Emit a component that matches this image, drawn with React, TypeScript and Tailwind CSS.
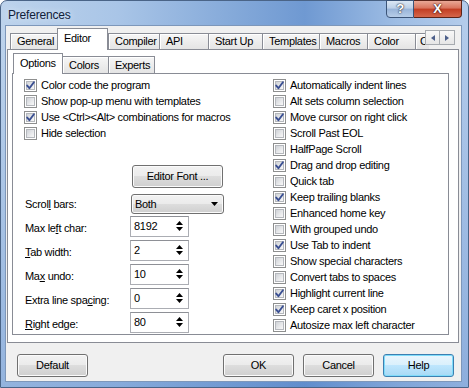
import type { FC } from "react";

const Check: FC<{ on?: boolean }> = ({ on }) => (
  <span className="relative block w-[13px] h-[13px] shrink-0 border border-[#8e8f8f] bg-white p-px">
    <span className="block w-full h-full border border-[#b5b8bd] bg-[linear-gradient(135deg,#cfd2d7_0%,#e9eaec_60%,#f8f8f8_100%)]" />
    {on && (
      <svg className="absolute left-0 top-0" width="11" height="11" viewBox="0 0 11 11">
        <path d="M2.2 5.6 L4.4 8.2 L8.9 2.2" fill="none" stroke="#3a4f92" strokeWidth="1.9" strokeLinecap="round" strokeLinejoin="round" />
      </svg>
    )}
  </span>
);

const CheckRow: FC<{ on?: boolean; label: string }> = ({ on, label }) => (
  <div className="flex items-center h-[16px] gap-[4px]">
    <Check on={on} />
    <span className="whitespace-nowrap">{label}</span>
  </div>
);

const Spin: FC<{ label: React.ReactNode; value: string }> = ({ label, value }) => (
  <div className="flex items-start h-[21px]">
    <span className="w-[106px] pl-px pt-[5px] leading-[14px] whitespace-nowrap">{label}</span>
    <div className="w-[59px] h-[21px] border border-[#abadb3] border-t-[#8e9096] bg-white flex items-start justify-between pl-[3px] pr-[5px]">
      <span className="pt-[2px] leading-[14px]">{value}</span>
      <svg className="mt-[2px]" width="7" height="14" viewBox="0 0 7 14">
        <path d="M0 6 L3.5 2 L7 6 Z" fill="#000" />
        <path d="M0 8 L3.5 12 L7 8 Z" fill="#000" />
      </svg>
    </div>
  </div>
);

const btn =
  "h-[23px] w-[71px] rounded-[3px] border border-[#707070] bg-[linear-gradient(#f2f2f2_0%,#ebebeb_49%,#dddddd_50%,#cfcfcf_100%)] shadow-[inset_0_0_0_1px_#fbfbfb] flex items-center justify-center";

const tabs: { name: string; w: string; sel?: boolean }[] = [
  { name: "General", w: "w-[47px]" },
  { name: "Editor", w: "w-[51px]", sel: true },
  { name: "Compiler", w: "w-[51px]" },
  { name: "API", w: "w-[49px]" },
  { name: "Start Up", w: "w-[54px]" },
  { name: "Templates", w: "w-[57px]" },
  { name: "Macros", w: "w-[48px]" },
  { name: "Color", w: "w-[48px]" },
];

const rightChecks: [string, boolean][] = [
  ["Automatically indent lines", true],
  ["Alt sets column selection", false],
  ["Move cursor on right click", true],
  ["Scroll Past EOL", false],
  ["HalfPage Scroll", false],
  ["Drag and drop editing", true],
  ["Quick tab", false],
  ["Keep trailing blanks", true],
  ["Enhanced home key", false],
  ["With grouped undo", false],
  ["Use Tab to indent", true],
  ["Show special characters", false],
  ["Convert tabs to spaces", false],
  ["Highlight current line", true],
  ["Keep caret x position", true],
  ["Autosize max left character", false],
];

const App: FC = () => {
  return (
    <div className="w-[469px] h-[388px] overflow-hidden font-['Liberation_Sans',Arial,sans-serif] text-[11px] tracking-[-0.3px] text-black">
      <div className="w-[469px] h-[388px] flex flex-col border border-[#4a6487] rounded-t-[7px] bg-[linear-gradient(180deg,rgba(70,120,195,0)_0px,rgba(70,120,195,0)_30px,rgba(70,120,195,0.35)_100%),linear-gradient(90deg,#bdd3ec_0%,#a9c5e7_25%,#84a9d9_50%,#6f99d2_65%,#9ebde4_85%,#b4cceb_100%)] pl-[4px] pr-[6px] pb-[5px]">
        {/* Title bar */}
        <div className="h-[24px] flex justify-between shrink-0">
          <span className="pl-[3px] pt-[5px] text-[12px] tracking-[-0.2px] text-[#10203a] [text-shadow:0_0_6px_#e8f1fb]">
            Preferences
          </span>
          <div className="flex -mt-px">
            <div className="w-[28px] h-[18px] rounded-bl-[4px] border border-[#3b5478] bg-[linear-gradient(#dbe7f4_0%,#bcd0e8_45%,#98b4d9_50%,#b7cde8_100%)] flex items-center justify-center text-[13px] font-bold text-white [text-shadow:0_0_1px_#223,0_0_2px_#223]">
              ?
            </div>
            <div className="w-[48px] h-[18px] rounded-br-[4px] border border-l-0 border-[#5b2318] bg-[linear-gradient(#e9a896_0%,#d9735c_45%,#c23d22_50%,#d5664a_100%)] flex items-center justify-center text-[13px] font-bold text-white [text-shadow:0_0_1px_#311,0_0_2px_#311]">
              X
            </div>
          </div>
        </div>

        {/* Client area */}
        <div className="flex-1 border border-[#7d97ba] bg-[#f0f0f0] flex flex-col pt-[2px]">
          <div className="relative ml-px w-[452px]">
            {/* Main tabs */}
            <div className="flex items-end h-[21px] pl-[3px]">
              {tabs.map((t) =>
                t.sel ? (
                  <div
                    key={t.name}
                    className={`${t.w} h-[22px] -mb-px relative z-10 bg-white border border-b-0 border-[#898c95] pl-[6px] flex items-center shrink-0`}
                  >
                    <span className="-mt-[2px]">{t.name}</span>
                  </div>
                ) : (
                  <div
                    key={t.name}
                    className={`${t.w} h-[16px] overflow-hidden whitespace-nowrap bg-[linear-gradient(#f6f6f6,#e4e4e4)] border-t border-l border-[#898c95] shadow-[inset_1px_1px_0_#fff] pl-[6px] flex items-center shrink-0`}
                  >
                    {t.name}
                  </div>
                )
              )}
              <div className="w-[14px] h-[16px] bg-[linear-gradient(#f6f6f6,#e4e4e4)] border-t border-l border-[#898c95] shadow-[inset_1px_1px_0_#fff] pl-[4px] flex items-center shrink-0">
                C
              </div>
            </div>
            {/* scroll arrows */}
            <div className="absolute left-[418px] top-[2px] flex">
              <div className="w-[15px] h-[15px] border border-[#a7abb0] bg-[linear-gradient(#f8f8f8,#e6e6e6)] flex items-center justify-center">
                <svg width="4" height="6" viewBox="0 0 4 6"><path d="M4 0 L0 3 L4 6 Z" fill="#4c5f8a" /></svg>
              </div>
              <div className="w-[15px] h-[15px] border border-l-0 border-[#a7abb0] bg-[linear-gradient(#f8f8f8,#e6e6e6)] flex items-center justify-center">
                <svg width="4" height="6" viewBox="0 0 4 6"><path d="M0 0 L4 3 L0 6 Z" fill="#4c5f8a" /></svg>
              </div>
            </div>

            {/* Tab panel */}
            <div className="w-[452px] h-[294px] border border-[#898c95] bg-white pt-[3px] pl-[4px]">
              {/* Sub tabs */}
              <div className="flex items-end h-[20px] pl-px">
                <div className="w-[50px] h-[21px] -mb-px relative z-10 bg-white border border-b-0 border-[#898c95] pl-[6px] flex items-center">
                  <span className="-mt-[2px]">Options</span>
                </div>
                <div className="w-[46px] h-[17px] bg-[linear-gradient(#f6f6f6,#e4e4e4)] border-t border-r border-[#898c95] shadow-[inset_1px_1px_0_#fff] pl-[6px] flex items-center">
                  Colors
                </div>
                <div className="w-[46px] h-[17px] bg-[linear-gradient(#f6f6f6,#e4e4e4)] border-t border-r border-[#898c95] shadow-[inset_1px_1px_0_#fff] pl-[6px] flex items-center">
                  Experts
                </div>
              </div>

              {/* Sub panel */}
              <div className="w-[437px] h-[262px] border border-[#898c95] bg-white flex pt-[3px]">
                {/* Left column */}
                <div className="w-[248px] pl-[11px] flex flex-col">
                  <CheckRow on label="Color code the program" />
                  <CheckRow label="Show pop-up menu with templates" />
                  <CheckRow on label="Use <Ctrl><Alt> combinations for macros" />
                  <CheckRow label="Hide selection" />

                  <div className={`${btn} w-[91px] h-[22px] ml-[108px] mt-[24px]`}>Editor Font ...</div>

                  <div className="flex items-center h-[20px] mt-[6px]">
                    <span className="w-[107px] pl-px">
                      Scrol<span className="underline">l</span> bars:
                    </span>
                    <div className="w-[93px] h-[20px] rounded-[3px] border border-[#707070] bg-[linear-gradient(#f2f2f2_0%,#ebebeb_49%,#dddddd_50%,#cfcfcf_100%)] shadow-[inset_0_0_0_1px_#fbfbfb] flex items-center justify-between pl-[3px] pr-[5px]">
                      <span>Both</span>
                      <svg width="7" height="4" viewBox="0 0 7 4"><path d="M0 0 L7 0 L3.5 4 Z" fill="#000" /></svg>
                    </div>
                  </div>

                  <div className="flex flex-col gap-[3px] mt-[2px]">
                    <Spin label={<>Max le<span className="underline">f</span>t char:</>} value="8192" />
                    <Spin label={<><span className="underline">T</span>ab width:</>} value="2" />
                    <Spin label={<>Ma<span className="underline">x</span> undo:</>} value="10" />
                    <Spin label={<>Extra line spa<span className="underline">c</span>ing:</>} value="0" />
                    <Spin label={<><span className="underline">R</span>ight edge:</>} value="80" />
                  </div>
                </div>

                {/* Right column */}
                <div className="pl-[12px] flex flex-col">
                  {rightChecks.map(([l, on]) => (
                    <CheckRow key={l} on={on} label={l} />
                  ))}
                </div>
              </div>
            </div>
          </div>

          {/* Buttons */}
          <div className="flex mt-[11px] pl-[11px] pr-[7px]">
            <div className={btn}>Default</div>
            <div className="flex-1" />
            <div className="flex gap-[9px]">
              <div className={btn}>OK</div>
              <div className={btn}>Cancel</div>
              <div className="h-[23px] w-[71px] rounded-[3px] border border-[#3c7fb1] bg-[linear-gradient(#eaf6fd_0%,#d9f0fc_49%,#bee6fd_50%,#a7d9f5_100%)] shadow-[inset_0_0_0_1px_#7fdcfa] flex items-center justify-center">
                Help
              </div>
            </div>
          </div>
        </div>
      </div>
    </div>
  );
};

export default App;
